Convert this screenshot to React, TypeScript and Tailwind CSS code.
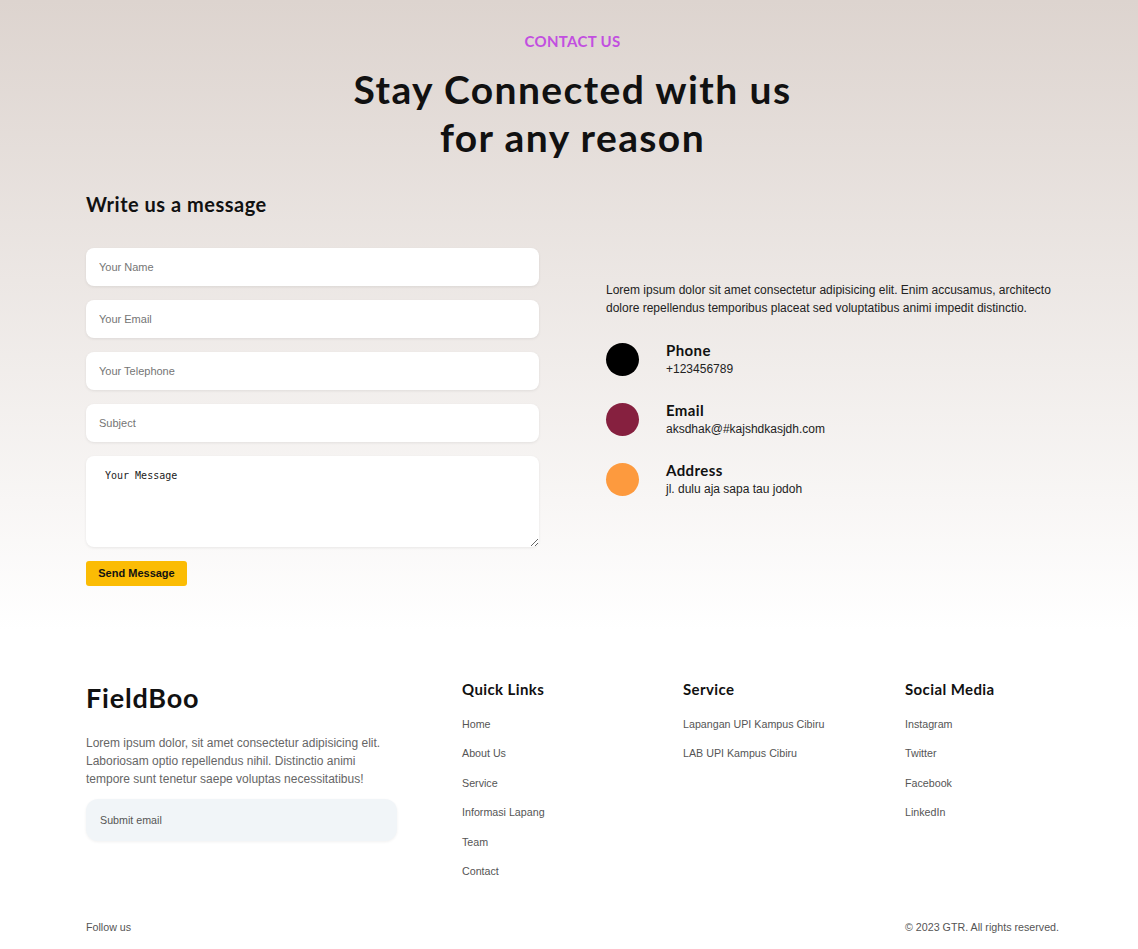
import React from "react";

const heading = "font-['Lato','Noto_Sans',sans-serif]";
const body = "font-['Liberation_Sans',Arial,sans-serif]";

const contacts = [
	{ title: "Phone", value: "+123456789", color: "bg-black" },
	{ title: "Email", value: "aksdhak@#kajshdkasjdh.com", color: "bg-[#86203f]" },
	{ title: "Address", value: "jl. dulu aja sapa tau jodoh", color: "bg-[#fd9a3e]" },
];

const quickLinks = ["Home", "About Us", "Service", "Informasi Lapang", "Team", "Contact"];
const services = ["Lapangan UPI Kampus Cibiru", "LAB UPI Kampus Cibiru"];
const socials = ["Instagram", "Twitter", "Facebook", "LinkedIn"];

const Field = ({ placeholder }: { placeholder: string }) => (
	<input
		placeholder={placeholder}
		className={`h-[38px] w-full rounded-lg bg-white px-[13px] text-[11px] text-gray-700 placeholder:text-[#757575] shadow-[0_1px_3px_rgba(0,0,0,0.08)] outline-none ${body}`}
	/>
);

const FooterCol = ({ title, items }: { title: string; items: string[] }) => (
	<div className="flex flex-col">
		<h4 className={`text-[15px] font-bold leading-5 tracking-[0.4px] text-[#111] ${heading}`}>{title}</h4>
		<ul className={`mt-[19px] flex flex-col gap-[16.4px] text-[10.7px] leading-[13px] text-[#555] ${body}`}>
			{items.map((item) => (
				<li key={item}>{item}</li>
			))}
		</ul>
	</div>
);

export default function App() {
	return (
		<div className="min-h-[949px] w-full bg-white">
			<section className="bg-gradient-to-b from-[#ddd4cf] to-white pl-[86px] pr-[79px] pt-[31px] pb-[45px]">
				<p className={`text-center text-[15px] font-bold leading-5 tracking-[0.3px] text-[#c24fe0] ${heading}`}>
					CONTACT US
				</p>
				<h2 className={`mt-[14px] text-center text-[39px] font-bold leading-[48px] tracking-[1.4px] text-[#111] ${heading}`}>
					Stay Connected with us
					<br />
					for any reason
				</h2>

				<div className="mt-[31px] grid grid-cols-2 gap-[67px]">
					<div>
						<h3 className={`text-[20px] font-bold leading-6 tracking-[0.5px] text-[#111] ${heading}`}>
							Write us a message
						</h3>
						<form className="mt-[32px] flex flex-col gap-[14px]">
							<Field placeholder="Your Name" />
							<Field placeholder="Your Email" />
							<Field placeholder="Your Telephone" />
							<Field placeholder="Subject" />
							<textarea
								placeholder="Your Message"
								className="h-[91px] w-full rounded-lg bg-white px-[19px] py-[12px] font-['DejaVu_Sans_Mono',monospace] text-[10px] text-gray-700 placeholder:text-[#222] shadow-[0_1px_3px_rgba(0,0,0,0.08)] outline-none"
							/>
						</form>
						<button
							className={`mt-[14px] h-[25px] w-[101px] rounded-[3px] bg-[#fbbc04] text-[11px] font-bold text-[#111] ${body}`}>
							Send Message
						</button>
					</div>

					<div className="pt-[89px]">
						<p className={`text-[12px] leading-[18px] text-[#222] ${body}`}>
							Lorem ipsum dolor sit amet consectetur adipisicing elit. Enim accusamus, architecto dolore
							repellendus temporibus placeat sed voluptatibus animi impedit distinctio.
						</p>
						<div className="mt-[26px] flex flex-col gap-[27px]">
							{contacts.map((c) => (
								<div key={c.title} className="flex items-center gap-[27px]">
									<div className={`h-[33px] w-[33px] rounded-full ${c.color}`} />
									<div className="-mt-[4px]">
										<p className={`text-[15px] font-bold leading-5 tracking-[0.4px] text-[#111] ${heading}`}>{c.title}</p>
										<p className={`mt-[2px] text-[12px] leading-[14px] text-[#222] ${body}`}>{c.value}</p>
									</div>
								</div>
							))}
						</div>
					</div>
				</div>
			</section>

			<footer className="bg-white pl-[86px] pr-[79px] pt-[49px] pb-[10px]">
				<div className="grid grid-cols-[376px_221px_222px_1fr]">
					<div>
						<h2 className={`text-[27px] font-bold leading-9 tracking-[0.8px] text-[#111] ${heading}`}>FieldBoo</h2>
						<p className={`mt-[18px] w-[310px] text-[12px] leading-[18px] text-[#666] ${body}`}>
							Lorem ipsum dolor, sit amet consectetur adipisicing elit. Laboriosam optio repellendus nihil. Distinctio
							animi tempore sunt tenetur saepe voluptas necessitatibus!
						</p>
						<div
							className={`mt-[11px] flex h-[42px] w-[311px] items-center rounded-xl bg-[#f1f5f8] px-[14px] text-[10.7px] text-[#555] shadow-[0_1px_3px_rgba(0,0,0,0.06)] ${body}`}>
							Submit email
						</div>
					</div>
					<div className="-mt-[1px]">
						<FooterCol title="Quick Links" items={quickLinks} />
					</div>
					<div className="-mt-[1px]">
						<FooterCol title="Service" items={services} />
					</div>
					<div className="-mt-[1px]">
						<FooterCol title="Social Media" items={socials} />
					</div>
				</div>

				<div className={`mt-[42px] flex justify-between text-[10.7px] leading-[14px] text-[#555] ${body}`}>
					<span>Follow us</span>
					<span>© 2023 GTR. All rights reserved.</span>
				</div>
			</footer>
		</div>
	);
}
